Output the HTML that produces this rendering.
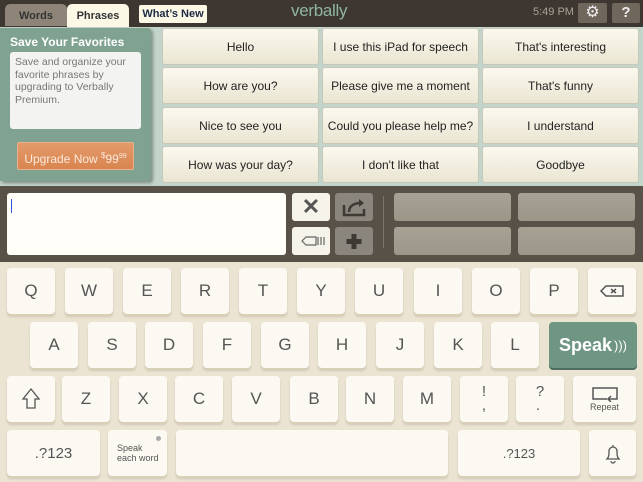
<!DOCTYPE html><html><head><meta charset="utf-8"><style>
*{box-sizing:border-box;margin:0;padding:0}
body{width:643px;height:482px;overflow:hidden;position:relative;font-family:"Liberation Sans",sans-serif;background:#ece4d2}
.a{position:absolute}
.top{left:0;top:0;width:643px;height:27px;background:#3e3731}
.ph{left:0;top:27px;width:643px;height:159px;background:#c3d5ca}
.pb{position:absolute;background:linear-gradient(#fbf9ef,#eae5d2);border:1px solid #c9c7b8;border-radius:3px;font-size:12px;color:#222;display:flex;align-items:center;justify-content:center;width:157px;height:37px}
.mid{left:0;top:186px;width:643px;height:76px;background:#575148}
.k{position:absolute;background:#fbf9f2;border-radius:4px;box-shadow:0 2px 0 #d9cfb7,0 3px 2px rgba(0,0,0,.12);color:#555;font-size:17px;display:flex;align-items:center;justify-content:center;width:48px;height:46px}
.g{position:absolute;background:linear-gradient(#a6a294,#9b9687);border-radius:3px;width:117px;height:28px}
</style></head><body>
<div class="a top"></div>
<div class="a" style="left:5px;top:4px;width:62px;height:22px;background:#8e8578;border-radius:5px 5px 0 0;font-size:11px;font-weight:bold;color:#333;text-align:center;line-height:24px">Words</div>
<div class="a" style="left:67px;top:4px;width:62px;height:23px;background:#fbf8e6;border-radius:5px 5px 0 0;font-size:11px;font-weight:bold;color:#333;text-align:center;line-height:24px">Phrases</div>
<div class="a" style="left:139px;top:5px;width:68px;height:18px;background:#fbf8e6;border-radius:2px;font-size:11px;font-weight:bold;color:#1e2a44;text-align:center;line-height:18px">What’s New</div>
<div class="a" style="left:291px;top:1px;font-size:17px;color:#8fb5a2;letter-spacing:-0.3px">verbally</div>
<div class="a" style="left:533px;top:6px;font-size:11px;color:#a9a197">5:49 PM</div>
<div class="a" style="left:578px;top:3px;width:29px;height:20px;background:#6f665c;border-radius:2px;color:#eee;text-align:center;font-size:16px;line-height:20px">⚙</div>
<div class="a" style="left:612px;top:3px;width:28px;height:20px;background:#6f665c;border-radius:2px;color:#eee;text-align:center;font-size:15px;font-weight:bold;line-height:20px">?</div>
<div class="a ph"></div>
<div class="a" style="left:0;top:28px;width:151px;height:153px;background:#7fa291;border-radius:0 3px 3px 0;box-shadow:2px 2px 3px rgba(0,0,0,.35)"></div>
<div class="a" style="left:10px;top:35px;font-size:12px;font-weight:bold;color:#fff">Save Your Favorites</div>
<div class="a" style="left:10px;top:52px;width:131px;height:77px;background:#f3f3f1;border-radius:3px;padding:4px 5px;font-size:10.5px;line-height:12.5px;color:#777">Save and organize your favorite phrases by upgrading to Verbally Premium.</div>
<div class="a" style="left:17px;top:142px;width:117px;height:28px;background:linear-gradient(#e39a6a,#d9854f);border:1px solid #e8b08c;border-radius:2px;color:#fbe9dc;font-size:12px;text-align:center;line-height:26px">Upgrade Now <sup style="font-size:8px">$</sup>99<sup style="font-size:7px">99</sup></div>
<div class="pb" style="left:162px;top:28px">Hello</div>
<div class="pb" style="left:322px;top:28px">I use this iPad for speech</div>
<div class="pb" style="left:482px;top:28px">That's interesting</div>
<div class="pb" style="left:162px;top:67px">How are you?</div>
<div class="pb" style="left:322px;top:67px">Please give me a moment</div>
<div class="pb" style="left:482px;top:67px">That's funny</div>
<div class="pb" style="left:162px;top:107px">Nice to see you</div>
<div class="pb" style="left:322px;top:107px">Could you please help me?</div>
<div class="pb" style="left:482px;top:107px">I understand</div>
<div class="pb" style="left:162px;top:146px">How was your day?</div>
<div class="pb" style="left:322px;top:146px">I don't like that</div>
<div class="pb" style="left:482px;top:146px">Goodbye</div>
<div class="a mid"></div>
<div class="a" style="left:7px;top:193px;width:279px;height:62px;background:#fffef8;border-radius:3px"></div>
<div class="a" style="left:11px;top:199px;width:1px;height:14px;background:#3355dd"></div>
<div class="a" style="left:292px;top:193px;width:38px;height:28px;background:#f5f3ea;border-radius:3px;color:#555;font-size:22px;font-weight:bold;text-align:center;line-height:28px">✕</div>
<div class="a" style="left:335px;top:193px;width:38px;height:28px;background:#8a867d;border-radius:3px"><svg width="38" height="28"><path d="M9 12v10h20v-6" fill="none" stroke="#3d3a35" stroke-width="2.5"/><path d="M14 19c0-6 5-9 12-9" fill="none" stroke="#3d3a35" stroke-width="2.5"/><path d="M24 6l5 4-5 4z" fill="#3d3a35"/></svg></div>
<div class="a" style="left:292px;top:227px;width:38px;height:28px;background:#f5f3ea;border-radius:3px"><svg width="38" height="28"><path d="M10 14l4-4h10v8H14z" fill="none" stroke="#666" stroke-width="1.2"/><path d="M26 10v8M29 10v8M32 10v8" stroke="#666" stroke-width="1.2"/></svg></div>
<div class="a" style="left:335px;top:227px;width:38px;height:28px;background:#8a867d;border-radius:3px"><svg width="38" height="28"><path d="M19 7v15M11.5 14.5h15" stroke="#3d3a35" stroke-width="5"/></svg></div>
<div class="a" style="left:383px;top:196px;width:1px;height:52px;background:#7a746a"></div>
<div class="g" style="left:394px;top:193px"></div><div class="g" style="left:518px;top:193px"></div>
<div class="g" style="left:394px;top:227px"></div><div class="g" style="left:518px;top:227px"></div>
<div class="k" style="left:7px;top:268px">Q</div><div class="k" style="left:65px;top:268px">W</div><div class="k" style="left:123px;top:268px">E</div><div class="k" style="left:181px;top:268px">R</div><div class="k" style="left:239px;top:268px">T</div><div class="k" style="left:297px;top:268px">Y</div><div class="k" style="left:355px;top:268px">U</div><div class="k" style="left:414px;top:268px">I</div><div class="k" style="left:472px;top:268px">O</div><div class="k" style="left:530px;top:268px">P</div>
<div class="k" style="left:588px;top:268px"><svg width="26" height="14"><path d="M2 7l5-5h17v10H7z" fill="none" stroke="#555" stroke-width="1.5"/><path d="M12 5l5 4M17 5l-5 4" stroke="#555" stroke-width="1.5"/></svg></div>
<div class="k" style="left:30px;top:322px">A</div><div class="k" style="left:88px;top:322px">S</div><div class="k" style="left:145px;top:322px">D</div><div class="k" style="left:203px;top:322px">F</div><div class="k" style="left:261px;top:322px">G</div><div class="k" style="left:318px;top:322px">H</div><div class="k" style="left:376px;top:322px">J</div><div class="k" style="left:434px;top:322px">K</div><div class="k" style="left:491px;top:322px">L</div>
<div class="k" style="left:549px;top:322px;width:88px;background:#6f9583;box-shadow:0 2px 0 #4f6e60;color:#fff;font-size:18px;font-weight:bold">Speak <span style="font-size:13px;font-weight:normal;margin-left:2px">)))</span></div>
<div class="k" style="left:7px;top:376px"><svg width="20" height="24"><path d="M10 2L2 12h4v9h8v-9h4z" fill="none" stroke="#555" stroke-width="1.3"/></svg></div>
<div class="k" style="left:62px;top:376px">Z</div><div class="k" style="left:119px;top:376px">X</div><div class="k" style="left:175px;top:376px">C</div><div class="k" style="left:232px;top:376px">V</div><div class="k" style="left:290px;top:376px">B</div><div class="k" style="left:346px;top:376px">N</div><div class="k" style="left:403px;top:376px">M</div>
<div class="k" style="left:460px;top:376px;flex-direction:column;line-height:14px;font-size:15px">!<br>,</div>
<div class="k" style="left:516px;top:376px;flex-direction:column;line-height:14px;font-size:15px">?<br>.</div>
<div class="k" style="left:573px;top:376px;width:63px;flex-direction:column;font-size:9px"><svg width="28" height="16"><path d="M16 13H2V2h24v8" fill="none" stroke="#555" stroke-width="1.5"/><path d="M26 10v3h-8M20 10l-3 3 3 3" fill="none" stroke="#555" stroke-width="1.5"/></svg>Repeat</div>
<div class="k" style="left:7px;top:430px;width:93px;font-size:15px">.?123</div>
<div class="k" style="left:108px;top:430px;width:59px;font-size:9px;line-height:10px;justify-content:flex-start;padding-left:9px">Speak<br>each word<span style="position:absolute;right:6px;top:6px;width:5px;height:5px;border-radius:50%;background:#aaa"></span></div>
<div class="k" style="left:176px;top:430px;width:272px"></div>
<div class="k" style="left:458px;top:430px;width:122px;font-size:13px">.?123</div>
<div class="k" style="left:589px;top:430px;width:47px"><svg width="20" height="22"><path d="M4 17c2-2 2-4 2-8a4 4 0 0 1 8 0c0 4 0 6 2 8z M8 19a2 2 0 0 0 4 0 M10 3v2" fill="none" stroke="#555" stroke-width="1.3"/></svg></div>
</body></html>
